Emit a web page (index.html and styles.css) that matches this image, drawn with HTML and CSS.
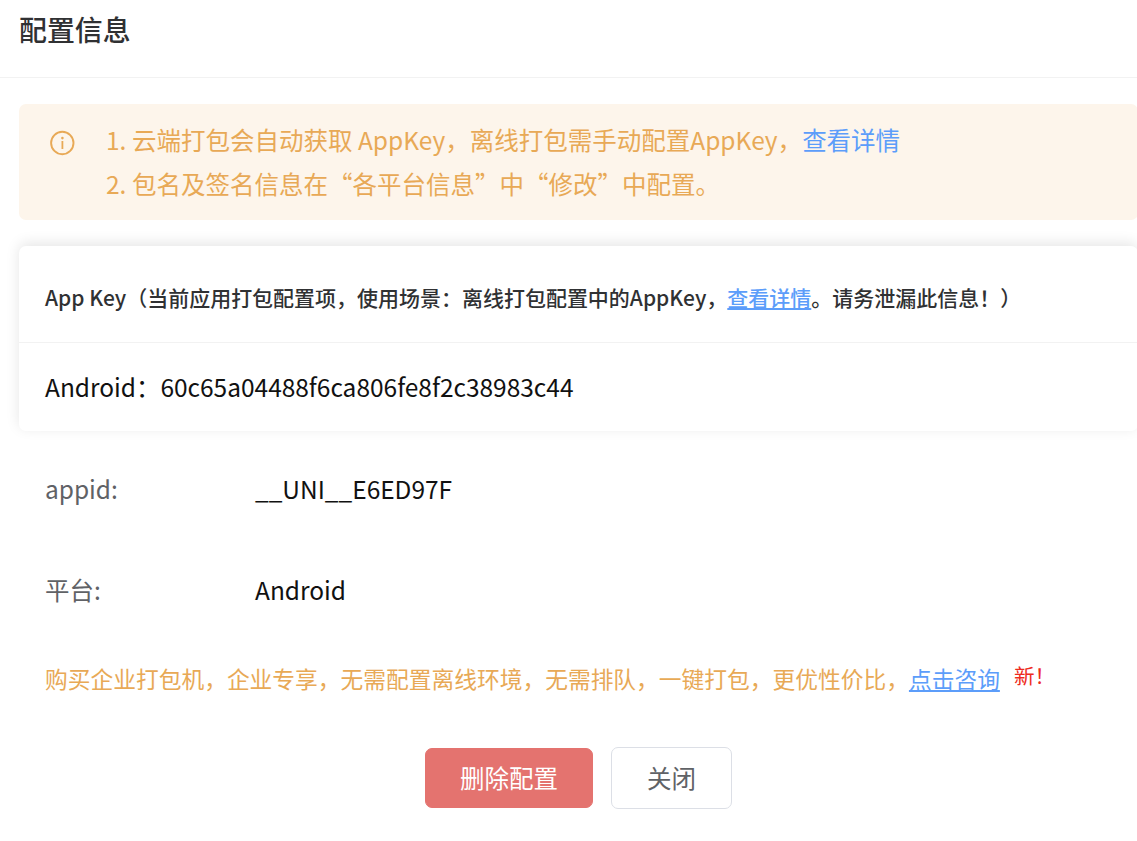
FILE: index.html
```html
<!DOCTYPE html>
<html lang="zh-CN">

<head>
    <meta charset="UTF-8">
    <meta name="viewport" content="width=device-width, initial-scale=1.0">
    <title>配置信息</title>
    <link rel="stylesheet" href="styles.css">
</head>

<body>
    <header class="header">
        <h1>配置信息</h1>
    </header>

    <main class="content">
        <div class="alert">
            <svg class="alert-icon" viewBox="0 0 26 26" fill="none" stroke="currentColor">
                <circle cx="13.3" cy="13" r="11.2" stroke-width="1.9" />
                <path d="M13.4 11v8" stroke-width="1.8" />
                <circle cx="13.4" cy="8.1" r="1.3" fill="currentColor" stroke="none" />
            </svg>
            <div class="alert-text">
                <p>1. 云端打包会自动获取 AppKey，离线打包需手动配置AppKey，<a href="#">查看详情</a></p>
                <p>2. 包名及签名信息在“各平台信息”中“修改”中配置。</p>
            </div>
        </div>

        <section class="card">
            <div class="card-header">App Key（当前应用打包配置项，使用场景：离线打包配置中的AppKey，<a href="#">查看详情</a>。请务泄漏此信息！）</div>
            <div class="card-body">Android：60c65a04488f6ca806fe8f2c38983c44</div>
        </section>

        <div class="form-item">
            <span class="label">appid:</span>
            <span class="value">__UNI__E6ED97F</span>
        </div>
        <div class="form-item">
            <span class="label">平台:</span>
            <span class="value">Android</span>
        </div>

        <p class="promo">购买企业打包机，企业专享，无需配置离线环境，无需排队，一键打包，更优性价比，<a href="#">点击咨询</a><sup class="new">新！</sup></p>

        <div class="footer">
            <button type="button" class="btn btn-danger">删除配置</button>
            <button type="button" class="btn">关闭</button>
        </div>
    </main>
</body>

</html>
```
FILE: styles.css
```css
body {
    margin: 0;
    font-family: "Noto Sans CJK SC", sans-serif;
    background-color: #ffffff;
    color: #111111;
    overflow: hidden;
}

p {
    margin: 0;
}

a {
    color: #5c9dfa;
}

.header {
    height: 77px;
    padding-left: 19px;
    border-bottom: 1px solid #f2f2f2;
}

h1 {
    margin: 0;
    font-size: 27.9px;
    font-weight: 500;
    line-height: 58px;
    color: #303133;
}

.content {
    padding: 26px 0 0 19px;
    margin-right: -1px;
    white-space: nowrap;
}

.alert {
    display: flex;
    height: 116px;
    box-sizing: border-box;
    padding: 14px 0 0 30px;
    border-radius: 7px;
    background-color: #fdf5eb;
    color: #e8a956;
    font-size: 24.5px;
    line-height: 44px;
}

.alert-icon {
    width: 26px;
    height: 26px;
    margin: 12px 31px 0 0;
}

.alert a {
    text-decoration: none;
}

.card {
    height: 185px;
    margin-top: 26px;
    border-radius: 7px;
    box-shadow: 0 -3px 14px rgba(0, 0, 0, 0.1);
}

.card-header {
    height: 96px;
    padding-left: 26px;
    border-bottom: 1px solid #f2f2f2;
    font-size: 20.99px;
    font-weight: 500;
    line-height: 102px;
    color: #303133;
}

.card-body {
    padding-left: 26px;
    font-size: 24.48px;
    line-height: 88px;
}

.form-item {
    display: flex;
    height: 101px;
    padding-left: 26px;
    font-size: 24.48px;
    line-height: 116px;
}

.label {
    width: 210px;
    color: #606266;
}

.promo {
    height: 64px;
    padding-left: 26px;
    font-size: 22.74px;
    line-height: 92px;
    color: #e8a956;
}

.new {
    margin-left: 14px;
    font-size: 20.6px;
    line-height: 0;
    vertical-align: 4px;
    color: #ee2a20;
}

.footer {
    display: flex;
    align-items: center;
    gap: 18px;
    padding: 50px 0 0 406px;
}

.btn {
    width: 121px;
    height: 62px;
    padding: 0 0 2px;
    border: 1px solid #dcdfe6;
    border-radius: 7px;
    background-color: #ffffff;
    font-family: inherit;
    font-size: 24.5px;
    color: #606266;
}

.btn-danger {
    width: 168px;
    height: 60px;
    border-color: #e4736f;
    background-color: #e4736f;
    color: #ffffff;
}
```
